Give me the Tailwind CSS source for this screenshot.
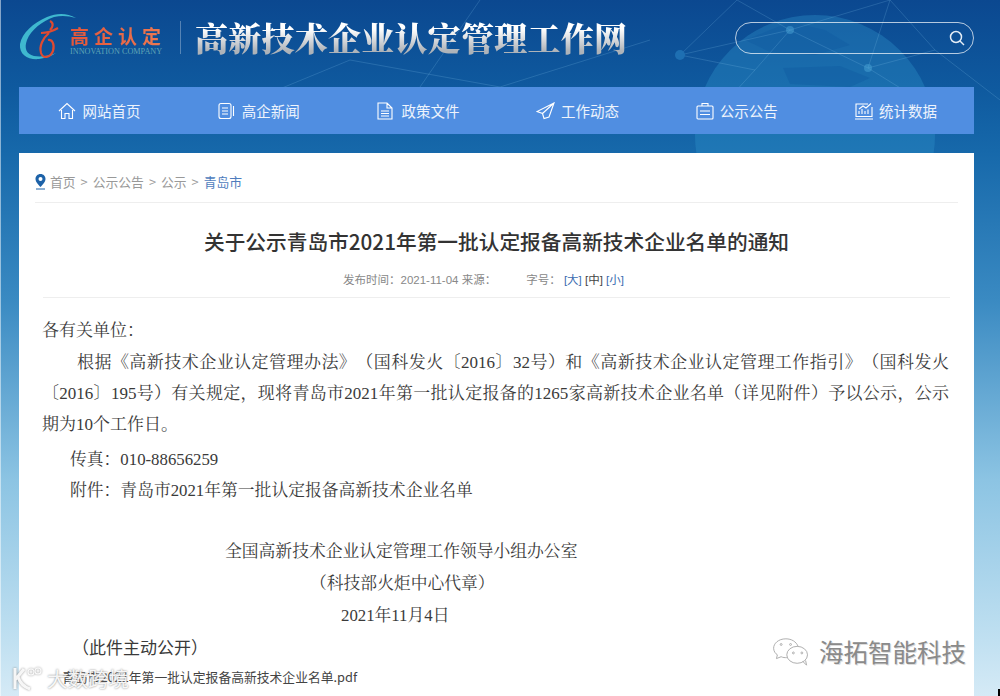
<!DOCTYPE html>
<html lang="zh">
<head>
    <meta charset="UTF-8">
    <title>高新技术企业认定管理工作网</title>
    <script src="https://cdn.jsdelivr.net/npm/@tailwindcss/browser@4"></script>
</head>
<body class="h-[696px] w-[1000px] overflow-hidden font-['Noto_Sans_CJK_SC','Liberation_Sans',sans-serif]">
<div class="relative h-[696px] overflow-hidden bg-[linear-gradient(180deg,#0b4890_0px,#0f5a9f_90px,#1668aa_150px,#3a8ac2_300px,#8cc4e3_480px,#c0e0f1_640px,#d5eaf6_696px)] pl-[19px]">

    <!-- background globe and network -->
    <svg class="absolute left-0 top-0 h-[153px] w-[1000px]" viewBox="0 0 1000 153" fill="none">
        <circle cx="815" cy="135" r="120" fill="#2f93cb" fill-opacity="0.36"/>
        <path d="M745 40L790 22L825 30L850 45L815 55L770 52ZM783 68L840 66L870 78L850 87L790 84Z" fill="#0f5a9f" fill-opacity="0.4"/>
        <g stroke="#7fc0ea" stroke-opacity="0.22" stroke-width="1">
            <path d="M680 55L737 0M680 55L790 30M680 55L755 70M755 70L790 30M790 30L737 0M790 30L890 0M790 30L868 68M868 68L890 0M868 68L935 50M935 50L890 0M755 70L700 130M868 68L960 125M935 50L1000 100M180 130L350 60M350 60L500 87M500 87L650 40M420 87L480 0"/>
        </g>
        <circle cx="680" cy="55" r="5" fill="#1e6fb2"/>
        <circle cx="868" cy="68" r="4" fill="#4aa3d6" fill-opacity="0.5"/>
        <circle cx="790" cy="30" r="4" fill="#4aa3d6" fill-opacity="0.5"/>
    </svg>

    <!-- header -->
    <div class="relative flex h-[87px] w-[955px] items-center">
        <svg class="-mr-[7px] mt-[-13px] h-[48px] w-[58px] shrink-0" viewBox="0 0 58 48" fill="none">
            <path d="M57 5C48 0 38 0 28 4C14 10 3 20 1 31C0 42 9 47 20 46C27 45 33 43 37 40C30 43 22 44 15 43C7 41 5 35 8 27C12 17 23 8 35 4C43 2 50 3 57 5Z" fill="#3fb8cf"/>
            <path d="M31 8C35 10 34 14 31 17M22 20C28 20 34 18 39 15M30 20C24 25 20 33 22 40C24 46 31 45 34 38C36 31 33 26 29 27" stroke="#e04a30" stroke-width="2.200"/>
        </svg>
        <div class="mt-[-7px] w-[96px]">
            <div class="whitespace-nowrap bg-[linear-gradient(90deg,#e3563a,#ee7a52)] bg-clip-text text-[19px] font-bold leading-[24px] tracking-[5px] text-transparent">高企认定</div>
            <div class="mt-[-1px] whitespace-nowrap text-[8.2px] leading-[10px] text-[#5fa5b6] font-['Liberation_Serif',serif]">INNOVATION COMPANY</div>
        </div>
        <div class="ml-[14px] mt-[-13px] h-[33px] w-px bg-white/30"></div>
        <div class="ml-[14px] mt-[-14px] whitespace-nowrap bg-[linear-gradient(180deg,#ffffff_30%,#aeb3b9_85%)] bg-clip-text text-[33px] font-black leading-[40px] tracking-[0.25px] text-transparent font-['Noto_Serif_CJK_SC','Noto_Sans_CJK_SC',serif]">高新技术企业认定管理工作网</div>
        <div class="ml-auto mt-[-12px] flex h-[32px] w-[239px] items-center justify-end rounded-full border border-white/70 pr-[8px]">
            <svg class="h-[16px] w-[16px]" viewBox="0 0 16 16" fill="none" stroke="#e4edf6" stroke-width="1.500"><circle cx="7" cy="7" r="5.500"/><path d="M11 11L15 15"/></svg>
        </div>
    </div>

    <!-- nav -->
    <nav class="relative grid h-[47px] w-[955px] grid-cols-6 bg-[#508ee1] text-[14.5px] text-white/90">
        <a class="flex items-center justify-center gap-[7px] pl-[1px]">
            <svg class="h-[18px] w-[18px]" viewBox="0 0 18 18" fill="none" stroke="#fff" stroke-width="1.100"><path d="M1 9L9 1.500L17 9M3.500 8V16.500H7V11.500H11V16.500H14.500V8"/></svg>
            <span>网站首页</span>
        </a>
        <a class="flex items-center justify-center gap-[7px] pl-[2px]">
            <svg class="h-[18px] w-[17px]" viewBox="0 0 17 18" fill="none" stroke="#fff" stroke-width="1.100"><rect x="1" y="1.500" width="12" height="15" rx="2"/><path d="M4 6H10M4 9H10M4 12H10M15.500 4V14"/></svg>
            <span>高企新闻</span>
        </a>
        <a class="flex items-center justify-center gap-[8px] pl-[3px]">
            <svg class="h-[18px] w-[16px]" viewBox="0 0 16 18" fill="none" stroke="#fff" stroke-width="1.100"><path d="M1 1H10L15 6V17H1ZM10 1V6H15M4 9H12M4 11.500H12M4 14H12"/></svg>
            <span>政策文件</span>
        </a>
        <a class="flex items-center justify-center gap-[6px] pl-[3px]">
            <svg class="h-[18px] w-[19px]" viewBox="0 0 19 18" fill="none" stroke="#fff" stroke-width="1.100"><path d="M18 1L1 9.500L6.500 11.500L8 16.500L13 15ZM18 1L6.500 11.500"/></svg>
            <span>工作动态</span>
        </a>
        <a class="flex items-center justify-center gap-[6px] pl-[3px]">
            <svg class="h-[18px] w-[18px]" viewBox="0 0 18 18" fill="none" stroke="#fff" stroke-width="1.100"><rect x="1" y="4" width="16" height="13" rx="1"/><path d="M6 4V1.500H12V4M4 9H14M4 12.500H14"/></svg>
            <span>公示公告</span>
        </a>
        <a class="flex items-center justify-center gap-[6px] pl-[3px]">
            <svg class="h-[18px] w-[18px]" viewBox="0 0 18 18" fill="none" stroke="#fff" stroke-width="1.100"><path d="M13 2H1V14.500H17V5M0 17H18M4 12V9M7 12V7M10 12V9M13 12V7.500M4 7L8 4L11 6L16 1.500"/></svg>
            <span>统计数据</span>
        </a>
    </nav>

    <!-- article card -->
    <main class="relative mt-[19px] h-[560px] w-[955px] bg-white">
        <div class="mx-[16px] flex h-[50px] items-center border-b border-[#eeeeee] pt-[9px] text-[12.8px] text-[#999999]">
            <svg class="mr-[4px] h-[16px] w-[11px]" viewBox="0 0 11 16"><path fill-rule="evenodd" d="M5.500 0C2.500 0 .5 2.200.5 5C.5 8 3.500 10.800 5.500 13C7.500 10.800 10.500 8 10.500 5C10.500 2.200 8.500 0 5.500 0ZM5.500 3A2 2 0 1 1 5.500 7A2 2 0 0 1 5.500 3Z" fill="#1d62a8"/><path d="M1 15H10" stroke="#1d62a8"/></svg>
            <span>首页</span><span class="mx-[5px]">&gt;</span><span>公示公告</span><span class="mx-[5px]">&gt;</span><span>公示</span><span class="mx-[5px]">&gt;</span><span class="text-[#4e7cbd]">青岛市</span>
        </div>
        <div class="ml-[24px] mr-[24px] border-b border-[#eeeeee]">
            <h1 class="mt-[22px] text-center text-[20.7px] font-medium leading-[32px] text-[#333333]">关于公示青岛市2021年第一批认定报备高新技术企业名单的通知</h1>
            <div class="flex h-[40px] items-center pt-[7px] pl-[300px] text-[11.5px] text-[#888888] font-['Liberation_Sans','Noto_Sans_CJK_SC',sans-serif]">
                <span>发布时间：2021-11-04 来源：</span>
                <span class="ml-[30px]">字号： <span class="text-[#3b6cb0]">[大]</span> <span class="text-[#444444]">[中]</span> <span class="text-[#3b6cb0]">[小]</span></span>
            </div>
        </div>
        <div class="ml-[23px] mr-[25px] pt-[17px] text-[16.8px] leading-[31px] text-[#3a3a3a] [text-spacing-trim:space-all] font-['Liberation_Serif','Noto_Serif_CJK_SC',serif]">
            <p class="text-[17px]">各有关单位：</p>
            <p class="mt-[1px] indent-[35px] text-justify text-[17px]">根据《高新技术企业认定管理办法》（国科发火〔2016〕32号）和《高新技术企业认定管理工作指引》（国科发火〔2016〕195号）有关规定，现将青岛市2021年第一批认定报备的1265家高新技术企业名单（详见附件）予以公示，公示期为10个工作日。</p>
            <p class="mt-[4px] pl-[28px]">传真：010-88656259</p>
            <p class="pl-[28px]">附件：青岛市2021年第一批认定报备高新技术企业名单</p>
            <p class="mt-[30px] pl-[183px]">全国高新技术企业认定管理工作领导小组办公室</p>
            <p class="mt-[1px] pl-[268px]">（科技部火炬中心代章）</p>
            <p class="mt-[1px] pl-[299px]">2021年11月4日</p>
            <p class="pl-[30px] text-[17px] font-['Noto_Sans_CJK_SC',sans-serif]">（此件主动公开）</p>
            <p class="pl-[20px] text-[12.8px] leading-[30px] text-[#444444] font-['Noto_Sans_CJK_SC','Liberation_Sans',sans-serif]">青岛市2021年第一批认定报备高新技术企业名单.pdf</p>
        </div>
    </main>

    <!-- watermarks -->
    <div class="absolute left-[12px] top-[664px] flex items-start text-[20.5px] leading-[28px] text-white/90 [text-shadow:0_0_2px_#777]">
        <svg class="mt-[1px] h-[26px] w-[34px] drop-shadow-[0_0_1px_#888]" viewBox="0 0 34 26" fill="none" stroke="#ffffff" stroke-opacity="0.9"><path d="M3 3V24M3 15L12 4M6 12C8 18 12 22 18 24" stroke-width="3"/><circle cx="19" cy="7" r="3" stroke-width="1.200"/><circle cx="26" cy="6" r="3" stroke-width="1.200"/></svg>
        <span class="ml-[1px]">大数跨境</span>
    </div>
    <div class="absolute left-[772px] top-[635px] flex items-center gap-[8px] text-[24.5px] leading-[34px] text-[#8a8a8a] [text-shadow:1px_1px_0_#ddd]">
        <svg class="h-[32px] w-[39px]" viewBox="0 0 40 34" fill="none" stroke="#aaaaaa" stroke-width="1"><path d="M14 3C6 3 1 8 1 13C1 16 3 19 5 20L4 24L9 22C11 23 13 23 15 23"/><path d="M14 3C20 3 25 6 27 11"/><ellipse cx="26" cy="20" rx="11" ry="9"/><path d="M32 27L36 31L35 26"/><circle cx="9" cy="9" r="1"/><circle cx="19" cy="9" r="1"/><circle cx="22" cy="18" r="1"/><circle cx="31" cy="18" r="1"/></svg>
        <span>海拓智能科技</span>
    </div>

    <!-- screenshot edge marks -->
    <div class="absolute inset-y-0 left-0 w-px bg-white/50"></div>
    <div class="absolute bottom-0 right-0 h-[7px] w-[2px] bg-black"></div>
</div>
</body>
</html>
